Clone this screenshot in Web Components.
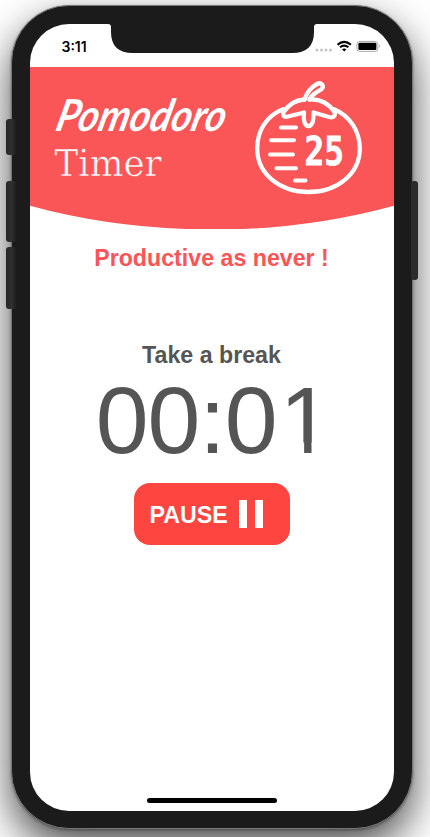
<!DOCTYPE html>
<html lang="en">
<head>
<meta charset="utf-8">
<title>Pomodoro Timer</title>
<style>
html,body{margin:0;width:430px;height:837px;overflow:hidden;background:#fff;font-family:"Liberation Sans",Arial,sans-serif}
</style>
</head>
<body>
<phone-frame>
  <status-bar>3:11</status-bar>
  <brand-header></brand-header>
  <session-panel></session-panel>
</phone-frame>
<script>
const define = (name, html) => customElements.define(name, class extends HTMLElement {
  constructor() {
    super();
    this.attachShadow({ mode: "open" }).innerHTML = html;
  }
});

define("phone-frame", `
<style>
:host{display:block;position:relative;box-sizing:border-box;width:430px;height:837px;padding:5px 17px 8px 11px;background:#fff;overflow:hidden}
.body{position:relative;box-sizing:border-box;width:402px;height:824px;padding:18px 18px 17px;border:1px solid #777;border-radius:58px;background:#1b1b1b;box-shadow:0 18px 42px rgba(0,0,0,.7),0 1px 3px rgba(0,0,0,.35)}
.screen{position:relative;display:flex;flex-direction:column;width:364px;height:787px;border-radius:39px;overflow:hidden;background:#fff}
.key{position:absolute;width:11px;border-radius:3px;background:linear-gradient(90deg,#262626,#303030 50%,#1b1b1b)}
.notch{position:absolute;left:73px;top:-1px;width:218px;height:30px;fill:#1b1b1b}
.home{position:absolute;left:117px;top:774px;width:130px;height:5px;border-radius:3px;background:#000}
</style>
<div class="body">
  <div class="screen">
    <slot></slot>
    <svg class="notch" viewBox="0 0 218 30"><path d="M0 0H218V1H214Q211 1 211 4V9Q211 30 189 30H30Q8 30 8 9V4Q8 1 5 1H0Z"/></svg>
    <div class="home"></div>
  </div>
  <div class="key" style="left:-6px;top:113px;height:36px"></div>
  <div class="key" style="left:-6px;top:175px;height:61px"></div>
  <div class="key" style="left:-6px;top:241px;height:62px"></div>
  <div class="key" style="left:399px;top:175px;height:99px;width:7px;background:#2b2b2b"></div>
</div>`);

define("status-bar", `
<style>
:host{display:flex;box-sizing:border-box;height:42.5px;flex:none;justify-content:space-between;align-items:flex-start;padding:14px 13px 0 31.5px;font:600 14px/17px Inter,"Liberation Sans",sans-serif;color:#000}
svg{display:block;width:68px;height:17px}
</style>
<span><slot></slot></span>
<svg viewBox="313 38 68 17">
  <g fill="#c4c4c4"><circle cx="317" cy="50" r="1.5"/><circle cx="321.5" cy="50" r="1.5"/><circle cx="326" cy="50" r="1.5"/><circle cx="330.5" cy="50" r="1.5"/></g>
  <g fill="none" stroke="#000" stroke-width="2.1"><path d="M337.5 44.7Q344.2 39 350.9 44.7"/><path d="M340 47.3Q344.2 43.8 348.4 47.3"/></g>
  <path d="M342 49.3Q344.2 47.7 346.4 49.3L344.2 51.5Z"/>
  <rect x="356.9" y="41.4" width="21" height="10" rx="3" fill="none" stroke="#aaa"/>
  <rect x="358.4" y="42.8" width="18" height="7.3" rx="1.4"/>
  <path d="M379 44.8Q380.5 46.4 379 48Z" fill="#888"/>
</svg>`);

define("tomato-badge", `
<style>
:host{display:block;width:114px;height:120px}
svg{display:block;width:100%;height:100%}
text{font-family:"DejaVu Sans Mono","Liberation Mono",monospace;font-weight:700;font-size:38.5px;fill:#fff;stroke:#fff;stroke-width:.8}
</style>
<svg viewBox="252 78 114 120">
  <g fill="none" stroke="#fff" stroke-width="4.3" stroke-linejoin="round" stroke-linecap="round">
    <path d="M283 109.3C266 116 257.2 131 257.2 148.5C257.2 174 280 192 308.5 192C337 192 359.8 174 359.8 148.5C359.8 131 350 116 334 109.3"/>
    <path d="M304.5 99.5C294 100 287 107 283.5 112Q282 118 288 116.5L304 112.5C303 121 305 126 308.5 126C312 126 314 121 313.5 112.5L329 117Q336 118.5 334.5 112C329 104 321 99 309.5 99.5"/>
    <path d="M304.5 99.5Q308 89 317 84Q320 82.3 322 84.4Q324 87 321.3 89.3C315 93 311.5 95 309.5 99.5"/>
  </g>
  <g stroke="#fff" stroke-width="4" stroke-linecap="round">
    <path d="M281 127.6H296M271 140.2H294M270 154.6H293M276.5 168.3H296M295 180.5H305.5"/>
  </g>
  <text x="304.6" y="164.6" textLength="39.5" lengthAdjust="spacingAndGlyphs">25</text>
</svg>`);

define("brand-header", `
<style>
:host{display:grid;position:relative;flex:none;box-sizing:border-box;height:162.5px;grid-template-columns:197px 114px;column-gap:5px;padding:11.5px 28px 0 20px;align-items:start}
.curve{position:absolute;inset:0;width:364px;height:162.5px}
.word{position:relative;width:197px;height:110px;overflow:visible}
.script{font:italic 700 44px Lato,"Liberation Sans",sans-serif;fill:#fff}
.slab{font:37px "DejaVu Serif","Liberation Serif",serif;fill:#fff;stroke:#fa5557;stroke-width:.5}
tomato-badge{position:relative}
</style>
<svg class="curve" viewBox="0 0 364 162.5"><path fill="#fa5557" d="M0 0H364V138.7Q277 162.5 184 162.5Q87 162.5 0 138.7Z"/></svg>
<svg class="word" viewBox="50 78 197 110">
  <text class="script" transform="translate(54 131) skewX(-14)" textLength="169" lengthAdjust="spacingAndGlyphs">Pomodoro</text>
  <text class="slab" x="54.5" y="176" textLength="107" lengthAdjust="spacingAndGlyphs">Timer</text>
</svg>
<tomato-badge></tomato-badge>`);

define("pause-button", `
<style>
:host{display:block}
button{display:flex;box-sizing:border-box;width:156px;height:62px;align-items:center;padding:0 0 0 15.5px;gap:11.5px;border:0;border-radius:16px;background:#ff453f;color:#fff;font:700 23.2px/28px "Liberation Sans",Arial,sans-serif}
span{padding-top:2px}
i{display:flex;gap:8px}
b{display:block;width:8px;height:28px;background:#fff}
</style>
<button><span><slot></slot></span><i><b></b><b></b></i></button>`);

define("session-panel", `
<style>
:host{display:flex;flex-direction:column;align-items:center;flex:1;color:#555;text-align:center;white-space:nowrap}
h1,h2,p{margin:0;font-weight:700;font-size:23.2px;line-height:28px}
h1{margin:15px 1px 0 0;color:#fa5557}
h2{margin:68.5px 1px 0 0}
.time{font-weight:400;font-size:95px;line-height:104px;letter-spacing:-1px;margin:-1px 0 .5px}
/* The last digit is drawn without its foot and set a little to the right. */
.one{display:inline-block;transform:translateX(3px);clip-path:polygon(0 0,100% 0,100% 75px,32px 75px,32px 100%,24.6px 100%,24.6px 75px,0 75px)}
pause-button{margin-top:11px}
</style>
<h1>Productive as never !</h1>
<h2>Take a break</h2>
<p class="time">00:0<span class="one">1</span></p>
<pause-button>PAUSE</pause-button>`);
</script>
</body>
</html>
